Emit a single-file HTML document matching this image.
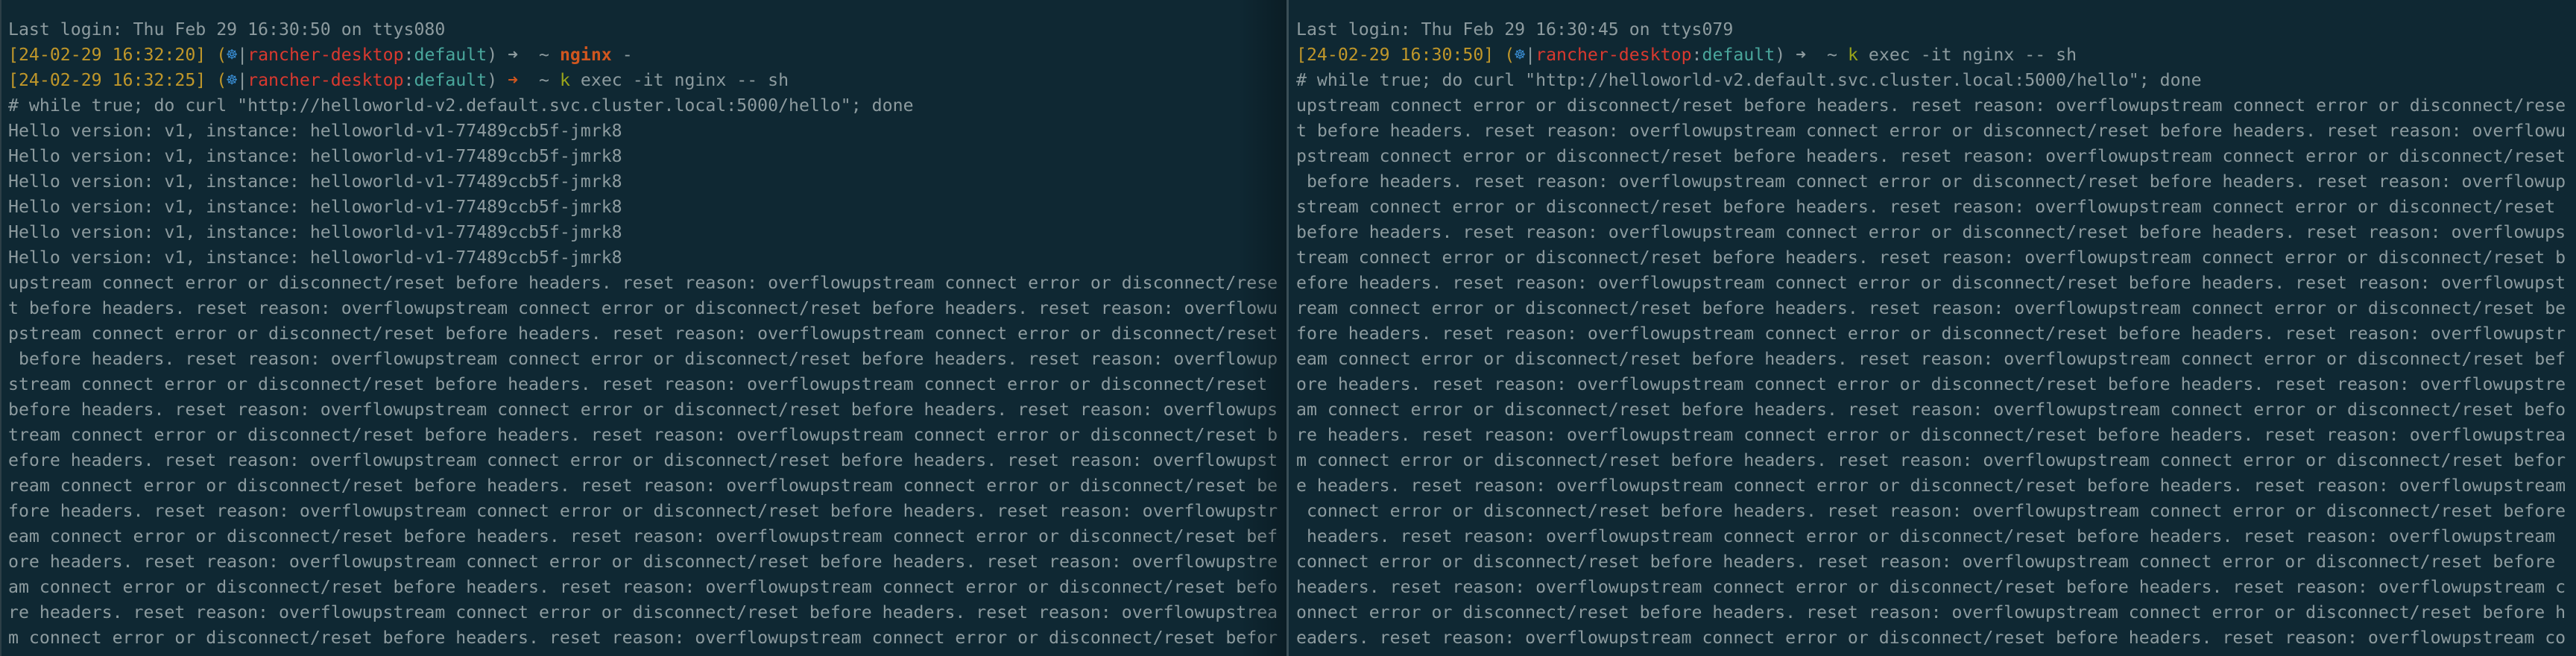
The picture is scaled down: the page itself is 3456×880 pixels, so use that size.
<!DOCTYPE html>
<html><head><meta charset="utf-8"><style>
html,body{margin:0;padding:0;width:3456px;height:880px;overflow:hidden;background:#0f2833;}
.pane{position:absolute;top:0;height:880px;background:#0f2833;overflow:hidden;}
#l{left:0;width:1726px;}
#r{left:1729px;width:1727px;}
#div{position:absolute;left:1726px;top:0;width:3px;height:880px;background:#3b4f57;}
#shade{position:absolute;left:1660px;top:0;width:66px;height:880px;background:linear-gradient(to right,rgba(0,0,0,0),rgba(0,0,0,0.28));}
#edge{position:absolute;left:0;top:0;width:2px;height:880px;background:#2c3f47;}
pre{margin:0;position:absolute;top:23px;font-family:"DejaVu Sans Mono","Liberation Mono",monospace;font-size:23.2px;line-height:34px;color:#8d9b9f;white-space:pre;}
#l pre{left:11px;}
#r pre{left:10px;}
.y{color:#c0972a}.rd{color:#d9392f}.c{color:#4aa79c}.b{color:#3a8fd6}.o{color:#d0561f;font-weight:bold}.oa{color:#d0561f}.g{color:#9aa51a}.gr{color:#8d9b9f}
</style></head><body>
<div class="pane" id="l"><div id="edge"></div><pre>Last login: Thu Feb 29 16:30:50 on ttys080
<span class="y">[24-02-29 16:32:20]</span> <span class="y">(</span><span class="b">☸</span>|<span class="rd">rancher-desktop</span>:<span class="c">default</span>) ➜  ~ <span class="o">nginx</span> -
<span class="y">[24-02-29 16:32:25]</span> <span class="y">(</span><span class="b">☸</span>|<span class="rd">rancher-desktop</span>:<span class="c">default</span>) <span class="oa">➜</span>  ~ <span class="g">k</span> exec -it nginx -- sh
# while true; do curl "http://helloworld-v2.default.svc.cluster.local:5000/hello"; done
Hello version: v1, instance: helloworld-v1-77489ccb5f-jmrk8
Hello version: v1, instance: helloworld-v1-77489ccb5f-jmrk8
Hello version: v1, instance: helloworld-v1-77489ccb5f-jmrk8
Hello version: v1, instance: helloworld-v1-77489ccb5f-jmrk8
Hello version: v1, instance: helloworld-v1-77489ccb5f-jmrk8
Hello version: v1, instance: helloworld-v1-77489ccb5f-jmrk8
upstream connect error or disconnect/reset before headers. reset reason: overflowupstream connect error or disconnect/rese
t before headers. reset reason: overflowupstream connect error or disconnect/reset before headers. reset reason: overflowu
pstream connect error or disconnect/reset before headers. reset reason: overflowupstream connect error or disconnect/reset
 before headers. reset reason: overflowupstream connect error or disconnect/reset before headers. reset reason: overflowup
stream connect error or disconnect/reset before headers. reset reason: overflowupstream connect error or disconnect/reset 
before headers. reset reason: overflowupstream connect error or disconnect/reset before headers. reset reason: overflowups
tream connect error or disconnect/reset before headers. reset reason: overflowupstream connect error or disconnect/reset b
efore headers. reset reason: overflowupstream connect error or disconnect/reset before headers. reset reason: overflowupst
ream connect error or disconnect/reset before headers. reset reason: overflowupstream connect error or disconnect/reset be
fore headers. reset reason: overflowupstream connect error or disconnect/reset before headers. reset reason: overflowupstr
eam connect error or disconnect/reset before headers. reset reason: overflowupstream connect error or disconnect/reset bef
ore headers. reset reason: overflowupstream connect error or disconnect/reset before headers. reset reason: overflowupstre
am connect error or disconnect/reset before headers. reset reason: overflowupstream connect error or disconnect/reset befo
re headers. reset reason: overflowupstream connect error or disconnect/reset before headers. reset reason: overflowupstrea
m connect error or disconnect/reset before headers. reset reason: overflowupstream connect error or disconnect/reset befor</pre><div id="shade"></div></div>
<div id="div"></div>
<div class="pane" id="r"><pre>Last login: Thu Feb 29 16:30:45 on ttys079
<span class="y">[24-02-29 16:30:50]</span> <span class="y">(</span><span class="b">☸</span>|<span class="rd">rancher-desktop</span>:<span class="c">default</span>) ➜  ~ <span class="g">k</span> exec -it nginx -- sh
# while true; do curl "http://helloworld-v2.default.svc.cluster.local:5000/hello"; done
upstream connect error or disconnect/reset before headers. reset reason: overflowupstream connect error or disconnect/rese
t before headers. reset reason: overflowupstream connect error or disconnect/reset before headers. reset reason: overflowu
pstream connect error or disconnect/reset before headers. reset reason: overflowupstream connect error or disconnect/reset
 before headers. reset reason: overflowupstream connect error or disconnect/reset before headers. reset reason: overflowup
stream connect error or disconnect/reset before headers. reset reason: overflowupstream connect error or disconnect/reset 
before headers. reset reason: overflowupstream connect error or disconnect/reset before headers. reset reason: overflowups
tream connect error or disconnect/reset before headers. reset reason: overflowupstream connect error or disconnect/reset b
efore headers. reset reason: overflowupstream connect error or disconnect/reset before headers. reset reason: overflowupst
ream connect error or disconnect/reset before headers. reset reason: overflowupstream connect error or disconnect/reset be
fore headers. reset reason: overflowupstream connect error or disconnect/reset before headers. reset reason: overflowupstr
eam connect error or disconnect/reset before headers. reset reason: overflowupstream connect error or disconnect/reset bef
ore headers. reset reason: overflowupstream connect error or disconnect/reset before headers. reset reason: overflowupstre
am connect error or disconnect/reset before headers. reset reason: overflowupstream connect error or disconnect/reset befo
re headers. reset reason: overflowupstream connect error or disconnect/reset before headers. reset reason: overflowupstrea
m connect error or disconnect/reset before headers. reset reason: overflowupstream connect error or disconnect/reset befor
e headers. reset reason: overflowupstream connect error or disconnect/reset before headers. reset reason: overflowupstream
 connect error or disconnect/reset before headers. reset reason: overflowupstream connect error or disconnect/reset before
 headers. reset reason: overflowupstream connect error or disconnect/reset before headers. reset reason: overflowupstream 
connect error or disconnect/reset before headers. reset reason: overflowupstream connect error or disconnect/reset before 
headers. reset reason: overflowupstream connect error or disconnect/reset before headers. reset reason: overflowupstream c
onnect error or disconnect/reset before headers. reset reason: overflowupstream connect error or disconnect/reset before h
eaders. reset reason: overflowupstream connect error or disconnect/reset before headers. reset reason: overflowupstream co</pre></div>
</body></html>
